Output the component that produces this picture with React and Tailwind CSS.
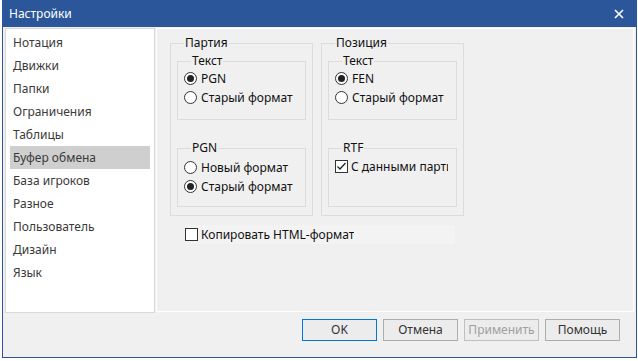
import React from 'react';

const items = ['Нотация', 'Движки', 'Папки', 'Ограничения', 'Таблицы', 'Буфер обмена', 'База игроков', 'Разное', 'Пользователь', 'Дизайн', 'Язык'];

function Radio({ checked, label }) {
    return (
        <div className="flex items-center h-[19px]">
            <span className="w-[13px] h-[13px] rounded-full border border-[#333] bg-white flex items-center justify-center">
                {checked && <span className="w-[7px] h-[7px] rounded-full bg-[#222]" />}
            </span>
            <span className="ml-[4px]">{label}</span>
        </div>
    );
}

function Check({ checked, label, className = '' }) {
    return (
        <div className={'flex items-center h-[19px] ' + className}>
            <span className="shrink-0 w-[13px] h-[13px] border border-[#333] bg-white flex items-center justify-center">
                {checked && (
                    <svg width="11" height="11" viewBox="0 0 11 11">
                        <polyline points="1.5,5.5 4,8 9.5,2" fill="none" stroke="#222" strokeWidth="1.3" />
                    </svg>
                )}
            </span>
            <span className="ml-[3px] whitespace-nowrap overflow-hidden">{label}</span>
        </div>
    );
}

function Group({ title, className = '', children }) {
    return (
        <fieldset className={'border border-[#dcdcdc] ' + className}>
            <legend className="ml-[7px] px-[1px] leading-[16px]">{title}</legend>
            {children}
        </fieldset>
    );
}

function Button({ children, primary, disabled }) {
    return (
        <button
            className={
                'w-[75px] h-[22px] bg-[#ececec] border text-[12px] leading-none ' +
                (primary ? 'border-[#0078d7] text-[#333]' : disabled ? 'border-[#bfbfbf] text-[#a0a0a0]' : 'border-[#adadad] text-[#333]')
            }
        >
            {children}
        </button>
    );
}

export default function App() {
    return (
        <div className="w-[638px] h-[361px] bg-white overflow-hidden text-[12px]" style={{ fontFamily: '"Noto Sans", "DejaVu Sans", sans-serif' }}>
            <div className="ml-[2px] w-[635px] h-[358px] border border-[#2b579a] bg-[#f0f0f0] flex flex-col">
                <div className="h-[26px] bg-[#2b579a] flex items-center justify-between pl-[6px] pr-[12px] text-white">
                    <span>Настройки</span>
                    <svg width="10" height="10" viewBox="0 0 10 10">
                        <path d="M1 1L9 9M9 1L1 9" stroke="white" strokeWidth="1.6" />
                    </svg>
                </div>
                <div className="flex pl-[2px] pt-[1px]">
                    <div className="w-[150px] h-[285px] border border-[#d9d9d9] bg-white pt-[2px] text-[#3a3a3a]">
                        {items.map((it) => (
                            <div key={it} className={'h-[23px] mx-[4px] px-[3px] flex items-center ' + (it === 'Буфер обмена' ? 'bg-[#cfcfcf]' : '')}>
                                {it}
                            </div>
                        ))}
                    </div>
                    <div className="ml-[1px] w-[478px] h-[284px] border border-white pl-[13px] pt-[6px] text-[#111]">
                        <div className="flex gap-[8px]">
                            <Group title="Партия" className="w-[143px] h-[181px] px-[6px]">
                                <Group title="Текст" className="mt-[2px] h-[67px] px-[6px]">
                                    <Radio checked label="PGN" />
                                    <Radio label="Старый формат" />
                                </Group>
                                <Group title="PGN" className="mt-[20px] h-[67px] px-[6px] pt-[2px]">
                                    <Radio label="Новый формат" />
                                    <Radio checked label="Старый формат" />
                                </Group>
                            </Group>
                            <Group title="Позиция" className="w-[143px] h-[181px] px-[6px]">
                                <Group title="Текст" className="mt-[2px] h-[67px] px-[6px]">
                                    <Radio checked label="FEN" />
                                    <Radio label="Старый формат" />
                                </Group>
                                <Group title="RTF" className="mt-[20px] h-[67px] px-[6px] pt-[1px]">
                                    <Check checked label="С данными партии" className="w-[113px]" />
                                </Group>
                            </Group>
                        </div>
                        <Check label="Копировать HTML-формат" className="mt-[9px] ml-[15px] w-[270px] bg-[#f3f3f3]" />
                    </div>
                </div>
                <div className="flex justify-end gap-[6px] pr-[16px] mt-[6px]">
                    <Button primary>OK</Button>
                    <Button>Отмена</Button>
                    <Button disabled>Применить</Button>
                    <Button>Помощь</Button>
                </div>
            </div>
        </div>
    );
}
